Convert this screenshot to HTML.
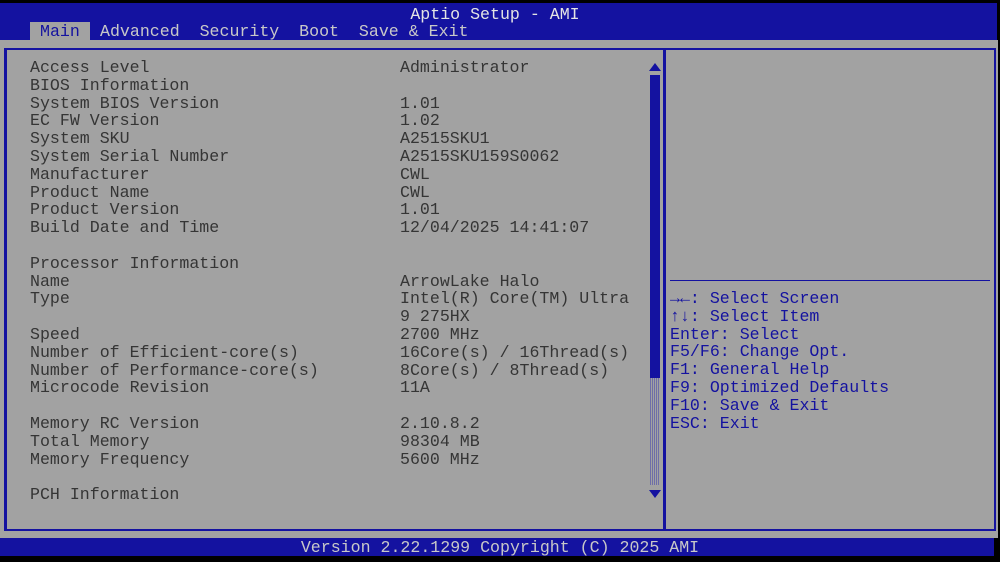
<!DOCTYPE html>
<html><head><meta charset="utf-8"><style>
*{margin:0;padding:0;box-sizing:border-box}
body{width:1000px;height:562px;background:#000;position:relative;overflow:hidden;font-family:"Liberation Mono",monospace;font-size:16.6px;}
.abs{position:absolute}
.t{position:absolute;white-space:pre;line-height:17.8px;}
</style></head><body>
<div class="abs" style="left:0;top:3px;width:997px;height:37px;background:#1412a0"></div>
<div class="abs" style="left:0;top:40px;width:998px;height:498px;background:#a2a2a2"></div>
<div class="abs" style="left:0;top:538px;width:994px;height:18px;background:#1412a0"></div>
<div class="t" style="left:0;width:990px;top:6px;text-align:center;color:#e4e4e4">Aptio Setup - AMI</div>
<div class="abs" style="left:30px;top:22px;width:60px;height:18px;background:#a2a2a2"></div>
<div class="t" style="left:40px;top:23px;color:#1412a0">Main</div>
<div class="t" style="left:100px;top:23px;color:#c8c8c8">Advanced  Security  Boot  Save &amp; Exit</div>
<!-- panels -->
<div class="abs" style="left:4px;top:48px;width:992px;height:483px;border:2px solid #1412a0;border-left-width:3px"></div>
<div class="abs" style="left:663px;top:48px;width:3px;height:483px;background:#1412a0"></div>
<div class="abs" style="left:670px;top:280px;width:320px;height:1px;background:#1412a0"></div>
<!-- scrollbar -->
<div class="abs" style="left:649px;top:63px;width:0;height:0;border-left:6px solid transparent;border-right:6px solid transparent;border-bottom:8px solid #1412a0"></div>
<div class="abs" style="left:650px;top:75px;width:10px;height:303px;background:#1412a0"></div>
<div class="abs" style="left:650px;top:378px;width:10px;height:107px;background:repeating-linear-gradient(90deg,#6e6ea8 0 1px,#a2a2a2 1px 2px)"></div>
<div class="abs" style="left:649px;top:490px;width:0;height:0;border-left:6px solid transparent;border-right:6px solid transparent;border-top:8px solid #1412a0"></div>
<div class="t" style="left:30px;top:59px;color:#353535">Access Level
BIOS Information
System BIOS Version
EC FW Version
System SKU
System Serial Number
Manufacturer
Product Name
Product Version
Build Date and Time

Processor Information
Name
Type

Speed
Number of Efficient-core(s)
Number of Performance-core(s)
Microcode Revision

Memory RC Version
Total Memory
Memory Frequency

PCH Information</div>
<div class="t" style="left:400px;top:59px;color:#353535">Administrator

1.01
1.02
A2515SKU1
A2515SKU159S0062
CWL
CWL
1.01
12/04/2025 14:41:07


ArrowLake Halo
Intel(R) Core(TM) Ultra
9 275HX
2700 MHz
16Core(s) / 16Thread(s)
8Core(s) / 8Thread(s)
11A

2.10.8.2
98304 MB
5600 MHz</div>
<div class="t" style="left:670px;top:290px;color:#1412a0"><b>→←</b>: Select Screen
<b>↑↓</b>: Select Item
Enter: Select
F5/F6: Change Opt.
F1: General Help
F9: Optimized Defaults
F10: Save &amp; Exit
ESC: Exit</div>
<div class="t" style="left:0;width:1000px;top:539px;text-align:center;color:#c8c8c8;line-height:18px">Version 2.22.1299 Copyright (C) 2025 AMI</div>
</body></html>
